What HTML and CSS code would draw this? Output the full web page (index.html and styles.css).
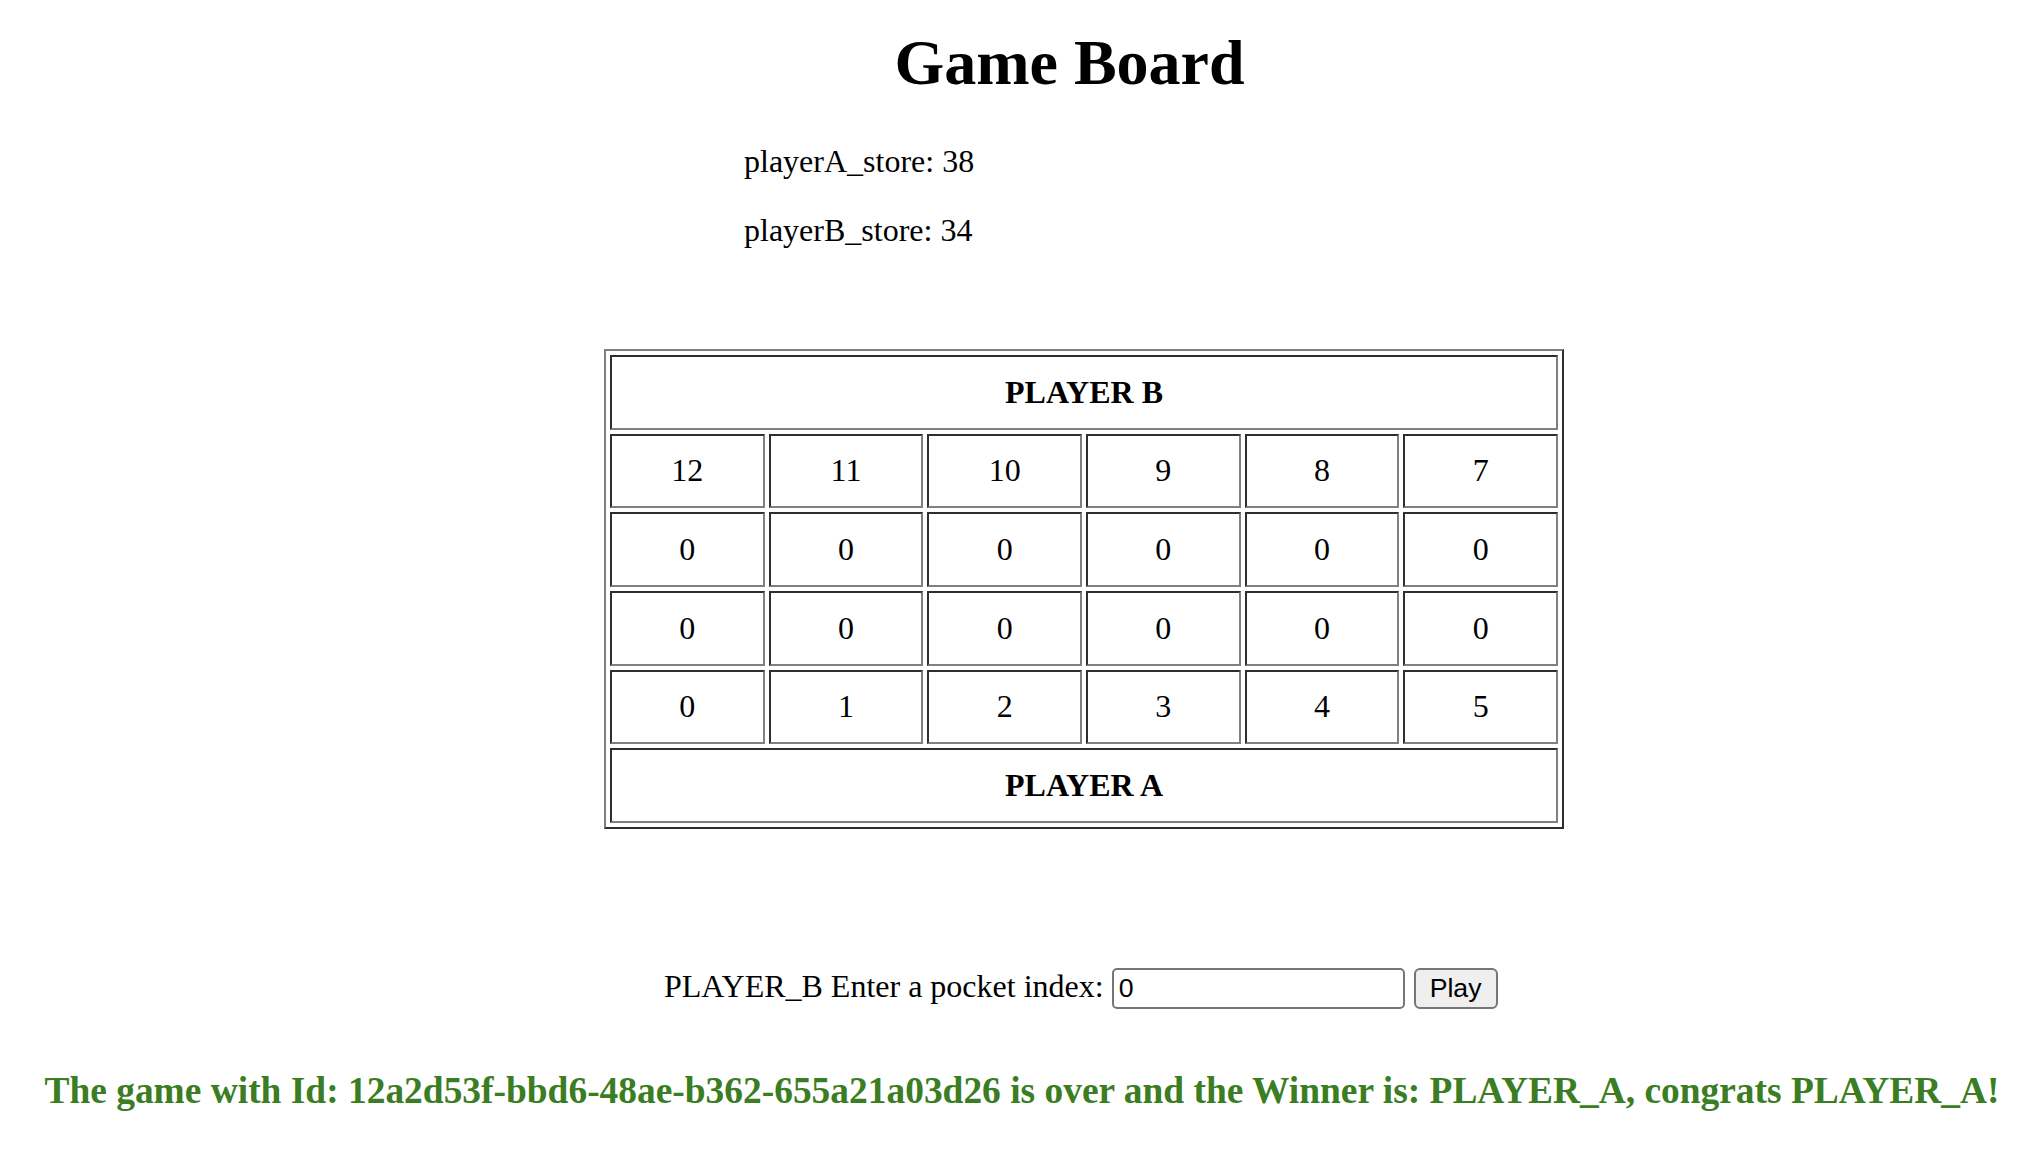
FILE: index.html
```html
<!DOCTYPE html>
<html>
<head>
<meta charset="utf-8">
<title>Game Board</title>
<link rel="stylesheet" href="styles.css">
</head>
<body>
<h1 class="title">Game Board</h1>
<div class="stores">
  <p class="store">playerA_store: 38</p>
  <p class="store">playerB_store: 34</p>
</div>
<table class="board">
  <tr><th colspan="6">PLAYER B</th></tr>
  <tr><td>12</td><td>11</td><td>10</td><td>9</td><td>8</td><td>7</td></tr>
  <tr><td>0</td><td>0</td><td>0</td><td>0</td><td>0</td><td>0</td></tr>
  <tr><td>0</td><td>0</td><td>0</td><td>0</td><td>0</td><td>0</td></tr>
  <tr><td>0</td><td>1</td><td>2</td><td>3</td><td>4</td><td>5</td></tr>
  <tr><th colspan="6">PLAYER A</th></tr>
</table>
<form class="play-form">
  <label class="play-label" for="pocket">PLAYER_B Enter a pocket index:</label>
  <input class="pocket-input" id="pocket" type="text" value="0">
  <button class="play-button" type="button">Play</button>
</form>
<h3 class="result">The game with Id: 12a2d53f-bbd6-48ae-b362-655a21a03d26 is over and the Winner is: PLAYER_A, congrats PLAYER_A!</h3>
</body>
</html>
```
FILE: styles.css
```css
html, body {
  margin: 0;
  padding: 0;
  background: #ffffff;
}

body {
  font-family: "Liberation Serif", "Times New Roman", serif;
  font-size: 32px;
  color: #000000;
}

.title {
  margin: 26px 0 43px 0;
  padding-left: 95px;
  font-size: 64px;
  line-height: 74px;
  font-weight: bold;
  text-align: center;
}

.stores {
  display: flex;
  flex-direction: column;
  gap: 32px;
  margin-left: 744px;
}

.store {
  margin: 0;
  line-height: 37px;
}

.board {
  margin: 100px 0 0 604px;
  width: 960px;
  height: 480px;
  table-layout: fixed;
  border-collapse: separate;
  border-spacing: 4px;
  border-style: solid;
  border-width: 2px;
  border-color: #808080 #2e2e2e #2e2e2e #808080;
}

.board td,
.board th {
  border-style: solid;
  border-width: 2px;
  border-color: #2e2e2e #808080 #808080 #2e2e2e;
  padding: 2px;
  text-align: center;
  vertical-align: middle;
  font-size: 32px;
  line-height: 37px;
}

.board th {
  font-weight: bold;
}

.play-form {
  display: flex;
  align-items: baseline;
  margin: 139px 0 0 664px;
}

.play-label {
  line-height: 37px;
  margin-right: 8px;
}

.pocket-input {
  box-sizing: border-box;
  width: 293px;
  height: 41px;
  margin: 0 9px 0 0;
  padding: 0 5px;
  border: 2px solid #767676;
  border-radius: 5px;
  font-family: "Liberation Sans", Arial, sans-serif;
  font-size: 26.67px;
  color: #000000;
  background: #ffffff;
}

.play-button {
  box-sizing: border-box;
  height: 41px;
  margin: 0;
  padding: 0 14px;
  border: 2px solid #767676;
  border-radius: 6px;
  background: #efefef;
  font-family: "Liberation Sans", Arial, sans-serif;
  font-size: 26.67px;
  color: #000000;
}

.result {
  margin: 60px 0 0 0;
  font-size: 37.44px;
  line-height: 43px;
  font-weight: bold;
  text-align: center;
  color: #3a7d22;
}
```
